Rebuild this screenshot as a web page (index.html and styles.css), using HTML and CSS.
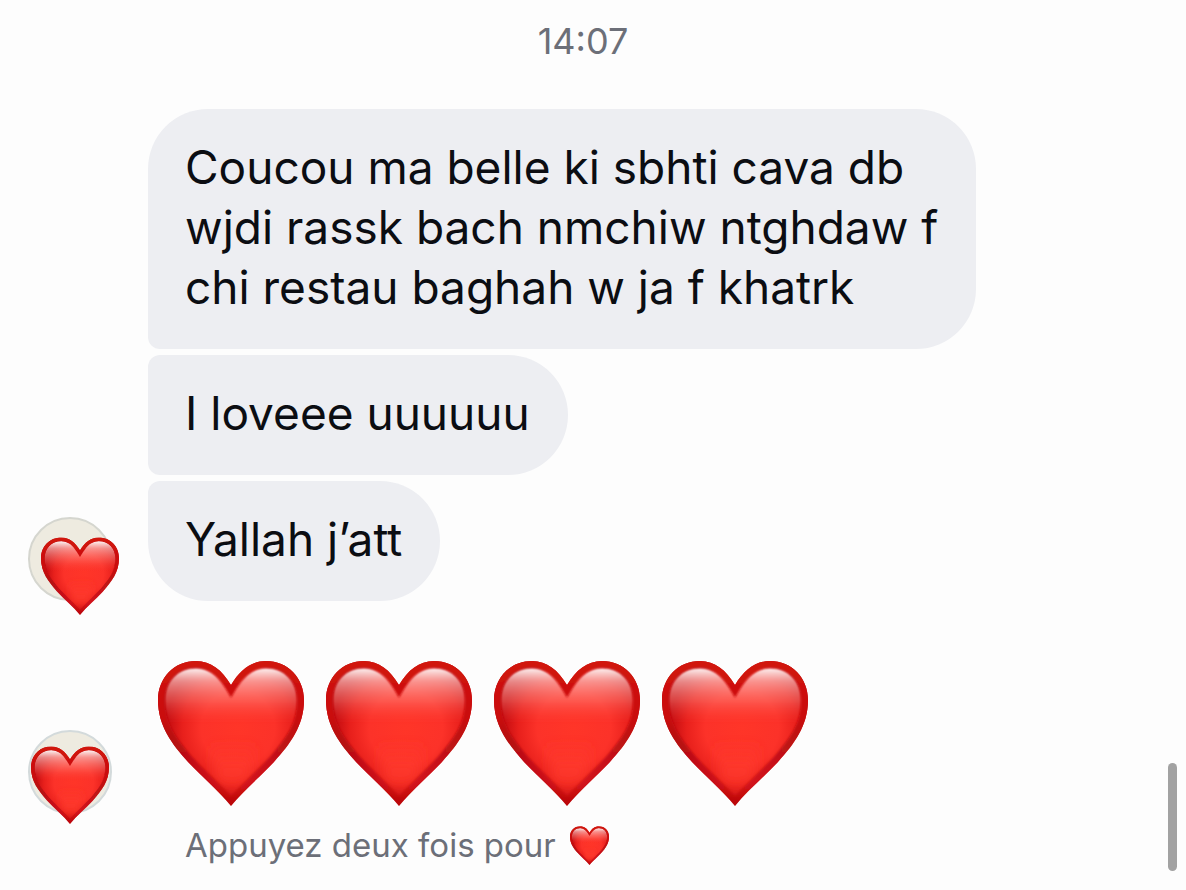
FILE: index.html
```html
<!DOCTYPE html>
<html lang="fr">
<head>
<meta charset="utf-8">
<meta name="viewport" content="width=device-width, initial-scale=1">
<title>Conversation</title>
<link rel="stylesheet" href="styles.css">
</head>
<body>
<svg class="defs" aria-hidden="true">
  <defs>
    <radialGradient id="heart-fill" gradientUnits="userSpaceOnUse" cx="80" cy="68" r="82">
      <stop offset="0" stop-color="#ff3528"/>
      <stop offset="0.45" stop-color="#fc3229"/>
      <stop offset="0.68" stop-color="#e8201c"/>
      <stop offset="0.88" stop-color="#c00b10"/>
      <stop offset="1" stop-color="#b8080d"/>
    </radialGradient>
    <linearGradient id="heart-rim" x1="0" y1="0" x2="0" y2="1">
      <stop offset="0" stop-color="#d1150f"/>
      <stop offset="0.4" stop-color="#c90c10"/>
      <stop offset="0.6" stop-color="#a80a10" stop-opacity="0.7"/>
      <stop offset="1" stop-color="#b80b10" stop-opacity="0.3"/>
    </linearGradient>
    <linearGradient id="heart-shine" gradientUnits="userSpaceOnUse" x1="0" y1="7" x2="0" y2="64">
      <stop offset="0" stop-color="#fff" stop-opacity="1"/>
      <stop offset="0.25" stop-color="#ffccc8" stop-opacity="0.66"/>
      <stop offset="0.6" stop-color="#ff8a82" stop-opacity="0.42"/>
      <stop offset="1" stop-color="#ff4036" stop-opacity="0"/>
    </linearGradient>
    <linearGradient id="heart-glow" gradientUnits="userSpaceOnUse" x1="73" y1="80" x2="73" y2="144">
      <stop offset="0" stop-color="#ff3a2c" stop-opacity="0"/>
      <stop offset="0.55" stop-color="#ff3a2c" stop-opacity="0.9"/>
      <stop offset="1" stop-color="#f02018" stop-opacity="0"/>
    </linearGradient>
    <filter id="heart-soft" x="-20%" y="-20%" width="140%" height="140%"><feGaussianBlur stdDeviation="6"/></filter>
    <filter id="heart-edge" x="-10%" y="-10%" width="120%" height="120%"><feGaussianBlur stdDeviation="1"/></filter>
    <clipPath id="heart-clip"><path d="M73 25C64 10 53 1 38 1C16 1 0 18 0 40C0 66 14 84 30 102C44 117 61 131 73 146C85 131 102 117 116 102C132 84 146 66 146 40C146 18 130 1 108 1C93 1 82 10 73 25Z"/></clipPath>
    <symbol id="heart" viewBox="0 0 146 146">
      <g clip-path="url(#heart-clip)">
        <path fill="url(#heart-fill)" d="M0 0H146V146H0Z"/>
        <path fill="url(#heart-glow)" filter="url(#heart-soft)" d="M52 82H98L92 118L73 136L58 120Z"/>
        <path fill="url(#heart-shine)" filter="url(#heart-edge)" d="M73 35C63 17 52 8 38 8C19 8 7 21 7 40C7 51 10 60 14 68H132C136 60 139 51 139 40C139 21 127 8 108 8C94 8 83 17 73 35Z"/>
        <path fill="none" stroke="url(#heart-rim)" stroke-width="13" filter="url(#heart-edge)" d="M73 25C64 10 53 1 38 1C16 1 0 18 0 40C0 66 14 84 30 102C44 117 61 131 73 146C85 131 102 117 116 102C132 84 146 66 146 40C146 18 130 1 108 1C93 1 82 10 73 25Z"/>
      </g>
    </symbol>
  </defs>
</svg>

<main class="thread">
  <time class="time" datetime="14:07">14:07</time>

  <section class="group">
    <div class="avatar">
      <svg class="avatar-heart avatar-heart-right" viewBox="0 0 146 146" role="img" aria-label="Cœur"><use href="#heart"/></svg>
    </div>
    <div class="bubbles">
      <p class="bubble">Coucou ma belle ki sbhti cava db<br>wjdi rassk bach nmchiw ntghdaw f<br>chi restau baghah w ja f khatrk</p>
      <p class="bubble">I loveee uuuuuu</p>
      <p class="bubble">Yallah j’att</p>
    </div>
  </section>

  <section class="group group-hearts">
    <div class="avatar">
      <svg class="avatar-heart" viewBox="0 0 146 146" role="img" aria-label="Cœur"><use href="#heart"/></svg>
    </div>
    <div class="hearts">
      <svg class="big-heart" viewBox="0 0 146 146" role="img" aria-label="Cœur"><use href="#heart"/></svg>
      <svg class="big-heart" viewBox="0 0 146 146" role="img" aria-label="Cœur"><use href="#heart"/></svg>
      <svg class="big-heart" viewBox="0 0 146 146" role="img" aria-label="Cœur"><use href="#heart"/></svg>
      <svg class="big-heart" viewBox="0 0 146 146" role="img" aria-label="Cœur"><use href="#heart"/></svg>
    </div>
  </section>

  <button class="hint" type="button">
    <span>Appuyez deux fois pour</span>
    <svg class="hint-heart" viewBox="0 0 146 146" aria-hidden="true"><use href="#heart"/></svg>
  </button>
</main>
<div class="scrollbar" aria-hidden="true"></div>
</body>
</html>
```

FILE: styles.css
```css
* {
  box-sizing: border-box;
}

body {
  margin: 0;
  background: #fdfdfd;
  color: #0b0d12;
  font-family: Inter, "Liberation Sans", sans-serif;
}

.defs {
  position: absolute;
  width: 0;
  height: 0;
}

.thread {
  display: flex;
  flex-direction: column;
  padding: 20px 20px 20px 28px;
}

.time {
  align-self: center;
  margin-right: 28px;
  color: #6c6f78;
  font-size: 36px;
  line-height: 42px;
}

.group {
  display: flex;
  align-items: flex-end;
  gap: 36px;
  margin-top: 47px;
}

.avatar {
  position: relative;
  flex: none;
  width: 84px;
  height: 84px;
  border: 2px solid #d5d6cf;
  border-radius: 50%;
  background: #eeebe0;
}

.avatar-heart {
  position: absolute;
  top: 14px;
  left: 1px;
  width: 78px;
  height: 78px;
}

.avatar-heart-right {
  top: 18px;
  left: 11px;
}

.group-hearts .avatar {
  border-color: #d3dadb;
}

.bubbles {
  display: flex;
  flex-direction: column;
  align-items: flex-start;
  gap: 6px;
}

.bubble {
  margin: 0;
  padding: 28px 38px 32px 37px;
  border-radius: 12px 60px 60px 12px;
  background: #edeef2;
  font-size: 46px;
  line-height: 60px;
}

.bubble:first-child {
  border-top-left-radius: 60px;
}

.bubble:last-child {
  border-bottom-left-radius: 60px;
}

.group-hearts {
  margin-top: 59px;
}

.hearts {
  display: flex;
  gap: 22px;
  padding: 0 10px 8px;
}

.big-heart {
  width: 146px;
  height: 146px;
}

.hint {
  display: flex;
  align-items: center;
  align-self: flex-start;
  gap: 14px;
  margin: 10px 0 0 157px;
  padding: 0;
  border: 0;
  background: none;
  color: #6c6f78;
  font-family: inherit;
  font-size: 33px;
  line-height: 42px;
}

.hint-heart {
  width: 39px;
  height: 39px;
}

.scrollbar {
  position: fixed;
  right: 9px;
  bottom: 19px;
  width: 9px;
  height: 108px;
  border-radius: 5px;
  background: #a2a2a2;
}
```
